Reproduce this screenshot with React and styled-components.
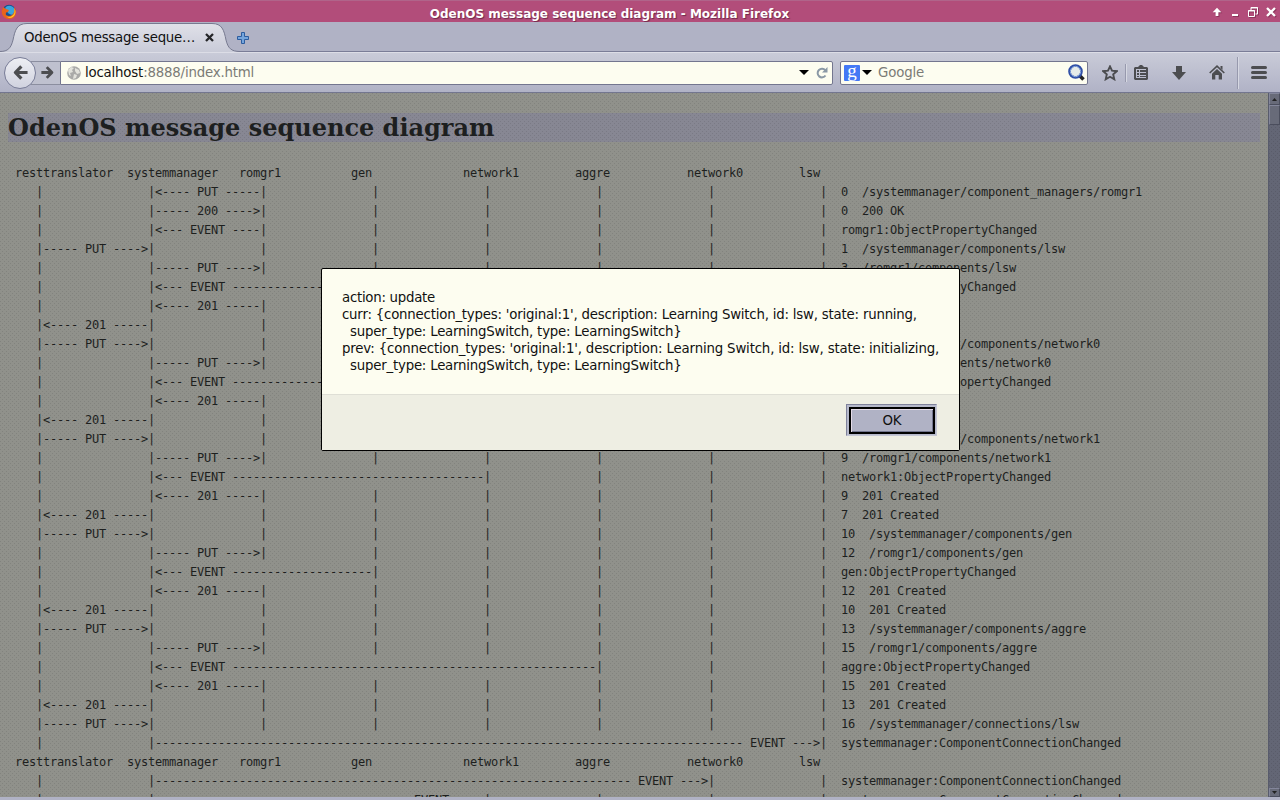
import React from 'react';
import styled, { createGlobalStyle } from 'styled-components';

const Global = createGlobalStyle`
  * { box-sizing: border-box; }
  html, body { margin: 0; padding: 0; overflow: hidden; }
`;

const ui = '"DejaVu Sans", sans-serif';

const dither = `
  background-image:
    radial-gradient(circle at 0.5px 0.5px, #00000018 0.7px, transparent 0.7px),
    radial-gradient(circle at 2.5px 2.5px, #00000018 0.7px, transparent 0.7px);
  background-size: 4px 4px;
`;

const Window = styled.div`
  position: relative;
  display: flex;
  flex-direction: column;
  width: 1280px;
  height: 800px;
  overflow: hidden;
  background: #b0b2c5;
  font-family: ${ui};
`;

const TitleBar = styled.header`
  display: flex;
  align-items: center;
  height: 22px;
  padding: 1px 3px 0 1px;
  border-top: 1px solid #b0648a;
  background: #b24d7a;
  color: #fff;
`;

const Title = styled.div`
  flex: 1;
  padding: 3px 9px 0 0;
  text-align: center;
  font: bold 12px/16px ${ui};
  text-shadow: 1px 1px 1px #6d2a4a;
`;

const WindowButtons = styled.div`
  display: flex;
  align-items: center;
  gap: 6px;
  svg { display: block; filter: drop-shadow(1px 1px 0 #8b355b); }
`;

const TabStrip = styled.div`
  display: flex;
  align-items: flex-end;
  height: 30px;
  background: #b0b2c5;
  box-shadow: inset 0 -1px #7a7d97;
`;

const Tab = styled.div`
  position: relative;
  display: flex;
  align-items: center;
  width: 236px;
  height: 30px;
  padding: 1px 0 0 24px;
  font: 13.33px/20px ${ui};
  color: #111;
`;

const TabShape = styled.svg`
  position: absolute;
  left: 0;
  top: 0;
`;

const TabLabel = styled.span`
  position: relative;
  width: 172px;
  white-space: nowrap;
  letter-spacing: -0.26px;
`;

const TabClose = styled.svg`
  position: relative;
  margin-left: 9px;
`;

const NewTab = styled.svg`
  margin: 0 0 8px 1px;
`;

const Toolbar = styled.nav`
  display: flex;
  align-items: center;
  height: 41px;
  padding: 0 12px 0 4px;
  background: linear-gradient(#c9cbd8, #b0b2c6);
  border-top: 1px solid #dcdde6;
  border-bottom: 1px solid #73768f;
`;

const BackButton = styled.div`
  position: relative;
  z-index: 1;
  display: grid;
  place-items: center;
  width: 32px;
  height: 32px;
  border: 1px solid #787c97;
  border-radius: 50%;
  background: linear-gradient(#edeef3, #d0d2df);
`;

const ForwardButton = styled.div`
  display: grid;
  place-items: center;
  width: 29px;
  height: 24px;
  margin-left: -5px;
  padding-left: 4px;
  border: solid #8b8e9f;
  border-width: 1px 0;
  background: #bfc1cf;
`;

const Field = styled.div`
  display: flex;
  align-items: center;
  width: ${p => p.$width}px;
  height: 24px;
  margin-left: ${p => p.$gap || 0}px;
  padding: 0 ${p => p.$right}px 0 ${p => p.$left}px;
  border: 1px solid #73768f;
  border-radius: ${p => p.$radius};
  background: #fdfdf0;
`;

const FieldText = styled.span`
  flex: 1;
  padding-left: ${p => p.$pad}px;
  font: 13.33px/20px ${ui};
  letter-spacing: ${p => p.$tracking || 0}px;
  color: #7b7b76;
  b { font-weight: normal; color: #111; }
`;

const Caret = styled.i`
  border: 5px solid transparent;
  border-top-color: #000;
  border-bottom: 0;
  margin: 0 ${p => p.$after}px 0 ${p => p.$before || 0}px;
`;

const EngineBadge = styled.span`
  display: grid;
  place-items: center;
  width: 16px;
  height: 16px;
  border-radius: 1px;
  background: #4479f5;
  color: #fff;
  font: 19px/12px "Liberation Serif", serif;
  padding-bottom: 5px;
`;

const Actions = styled.div`
  flex: 1;
  display: flex;
  align-items: center;
  padding-left: 14px;
  svg { display: block; flex: none; }
`;

const Icon = styled.svg`
  margin-left: ${p => p.$before || 0}px;
`;

const Rule = styled.i`
  width: 1px;
  height: ${p => p.$h}px;
  margin: 0 ${p => p.$after}px 0 ${p => p.$before}px;
  background: #9799ad;
  box-shadow: 1px 0 #d6d8e2;
`;

const Content = styled.div`
  display: flex;
  height: 704px;
`;

const Page = styled.main`
  flex: 1;
  height: 704px;
  overflow: hidden;
  padding: 20px 8px 0;
  background-color: #90918b;
  ${dither}
`;

const Heading = styled.h1`
  height: 29px;
  margin: 0 0 22px;
  font: bold 24px/29px "DejaVu Serif", serif;
  color: #1d1f20;
  background-color: #878793;
  ${dither}
`;

const Diagram = styled.pre`
  margin: 0;
  font: 12px/19px "DejaVu Sans Mono", monospace;
  letter-spacing: -0.224px;
  color: #1d1f1e;
`;

const ScrollBar = styled.aside`
  display: flex;
  flex-direction: column;
  width: 12px;
  background-color: #636675;
  ${dither}
  border-left: 1px solid #585b6c;
`;

const ScrollPart = styled.div`
  display: grid;
  place-items: center;
  height: ${p => p.$h}px;
  margin-top: ${p => (p.$push ? 'auto' : 0)};
  border: 1px solid #4b4e5d;
  border-top-color: #83869a;
  border-left-color: #83869a;
  background: #686b79;
`;

const Dialog = styled.section`
  position: absolute;
  left: 321px;
  top: 268px;
  display: flex;
  flex-direction: column;
  width: 639px;
  height: 183px;
  border: 1px solid #000;
  border-radius: 2px;
  background: #fdfdf0;
`;

const Message = styled.div`
  height: 125px;
  padding: 20px 0 0 20px;
  white-space: pre;
  font: 13.33px/17px ${ui};
  color: #111;
`;

const MessageLine = styled.div`
  letter-spacing: ${p => p.$tracking}px;
`;

const DialogFooter = styled.footer`
  flex: 1;
  display: flex;
  justify-content: flex-end;
  padding: 9px 22px 0 0;
  border-top: 1px solid #dfdfd6;
  background: #eeeee3;
`;

const OkFrame = styled.div`
  width: 91px;
  height: 32px;
  padding: 2px;
  border: 1px solid;
  border-color: #7f829b #c4c6d4 #c4c6d4 #7f829b;
  background: #b6b9cb;
`;

const OkButton = styled.button`
  display: block;
  width: 86px;
  height: 27px;
  padding: 0;
  border: 2px solid #000;
  background: #b0b2c5;
  box-shadow: inset 1px 1px #e4dbe8, inset -1px -1px #73768f;
  font: 13.33px/22px ${ui};
  color: #111;
`;

const LANES = ['resttranslator', 'systemmanager', 'romgr1', 'gen', 'network1', 'aggre', 'network0', 'lsw'];
const HEADER = LANES.map(n => ' ' + n.padEnd(15)).join('').trimEnd();

const ROWS = [
  null,
  ['PUT', 2, 1, '0  /systemmanager/component_managers/romgr1'],
  ['200', 1, 2, '0  200 OK'],
  ['EVENT', 2, 1, 'romgr1:ObjectPropertyChanged'],
  ['PUT', 0, 1, '1  /systemmanager/components/lsw'],
  ['PUT', 1, 2, '3  /romgr1/components/lsw'],
  ['EVENT', 7, 1, 'lsw:ObjectPropertyChanged'],
  ['201', 2, 1, '3  201 Created'],
  ['201', 1, 0, '1  201 Created'],
  ['PUT', 0, 1, '4  /systemmanager/components/network0'],
  ['PUT', 1, 2, '6  /romgr1/components/network0'],
  ['EVENT', 6, 1, 'network0:ObjectPropertyChanged'],
  ['201', 2, 1, '6  201 Created'],
  ['201', 1, 0, '4  201 Created'],
  ['PUT', 0, 1, '7  /systemmanager/components/network1'],
  ['PUT', 1, 2, '9  /romgr1/components/network1'],
  ['EVENT', 4, 1, 'network1:ObjectPropertyChanged'],
  ['201', 2, 1, '9  201 Created'],
  ['201', 1, 0, '7  201 Created'],
  ['PUT', 0, 1, '10  /systemmanager/components/gen'],
  ['PUT', 1, 2, '12  /romgr1/components/gen'],
  ['EVENT', 3, 1, 'gen:ObjectPropertyChanged'],
  ['201', 2, 1, '12  201 Created'],
  ['201', 1, 0, '10  201 Created'],
  ['PUT', 0, 1, '13  /systemmanager/components/aggre'],
  ['PUT', 1, 2, '15  /romgr1/components/aggre'],
  ['EVENT', 5, 1, 'aggre:ObjectPropertyChanged'],
  ['201', 2, 1, '15  201 Created'],
  ['201', 1, 0, '13  201 Created'],
  ['PUT', 0, 1, '16  /systemmanager/connections/lsw'],
  ['EVENT', 1, 7, 'systemmanager:ComponentConnectionChanged'],
  null,
  ['EVENT', 1, 6, 'systemmanager:ComponentConnectionChanged'],
  ['EVENT', 1, 4, 'systemmanager:ComponentConnectionChanged'],
];

// Lifelines sit 16 characters apart, starting at column 4.
function renderRow(row) {
  if (!row) return HEADER;
  const [label, from, to, note] = row;
  const lo = Math.min(from, to);
  const hi = Math.max(from, to);
  const width = (hi - lo) * 16 - 1;
  const stub = label === 'EVENT' ? '---' : '----';
  const arrow = from > to
    ? `<${stub} ${label} `.padEnd(width, '-')
    : ` ${label} ${stub}>`.padStart(width, '-');
  let line = '    ';
  for (let i = 0; i < LANES.length; i++) {
    line += '|';
    if (i === lo) { line += arrow; i = hi - 1; }
    else if (i < LANES.length - 1) line += ' '.repeat(15);
  }
  return line + '  ' + note;
}

const MESSAGE = [
  ['action: update', -0.27],
  ["curr: {connection_types: 'original:1', description: Learning Switch, id: lsw, state: running,", -0.207],
  ['  super_type: LearningSwitch, type: LearningSwitch}', -0.215],
  ["prev: {connection_types: 'original:1', description: Learning Switch, id: lsw, state: initializing,", -0.167],
  ['  super_type: LearningSwitch, type: LearningSwitch}', -0.215],
];

const FirefoxLogo = () => (
  <svg width="16" height="16" viewBox="0 0 16 16">
    <circle cx="8" cy="7.5" r="6.8" fill="#16508f" />
    <path d="M4 4Q7 0 12 3Q15 6 13 10Q10 12 7 9Z" fill="#3ba4dc" />
    <path d="M2 3Q0 7 1 10Q3 15 8 15Q14 15 15 9Q15 5 13 3Q14 8 11 11Q8 13 5 11Q4 8 7 8L8 6L5 5Z" fill="#e8641b" />
    <path d="M13 4Q15 9 11 12Q8 14 5 12Q9 16 13 12Q16 8 13 4Z" fill="#ffc928" />
  </svg>
);

const Arrow = ({ size = 14, flip }) => (
  <svg width={size} height={size} viewBox="0 0 14 14" fill="none" stroke="#4c4d50" strokeWidth="3" strokeLinejoin="round">
    <g transform={flip ? 'matrix(-1 0 0 1 14 0)' : undefined}>
      <path d="M7.8 1.2L2.2 7L7.8 12.8M3 7H13.6" />
    </g>
  </svg>
);

const Globe = () => (
  <svg width="14" height="14" viewBox="0 0 14 14">
    <circle cx="7" cy="7" r="6.8" fill="#aaaaa8" />
    <path d="M1 4L4 1L7 2L5 4L6 6L3 7L4 10L2 9ZM8 2L12 4L13 7L10 8L8 5ZM7 8L10 9L9 12L6 13Z" fill="#e3e3dc" />
  </svg>
);

export default function App() {
  return (
    <Window>
      <Global />
      <TitleBar>
        <FirefoxLogo />
        <Title>OdenOS message sequence diagram - Mozilla Firefox</Title>
        <WindowButtons>
          <svg width="12" height="10" viewBox="0 0 12 10"><path d="M6 .8L10.3 5.3H7.4V9H4.6V5.3H1.7Z" fill="#fff" /></svg>
          <svg width="12" height="10" viewBox="0 0 12 10"><path d="M3 7H9V9H3Z" fill="#fff" /></svg>
          <svg width="12" height="12" viewBox="0 0 12 12" fill="none" stroke="#fff"><path d="M4 4V1.5H10.5V8H8.5M4 2H11M1.5 4.5H7.5V10.5H1.5ZM1 5H8" /></svg>
          <svg width="12" height="12" viewBox="0 0 12 12"><path d="M2 2L10 10M10 2L2 10" stroke="#fff" strokeWidth="2.3" /></svg>
        </WindowButtons>
      </TitleBar>
      <TabStrip>
        <Tab>
          <TabShape width="240" height="30" viewBox="0 0 240 30">
            <defs><linearGradient id="tab" x2="0" y2="1"><stop stopColor="#e0e1e9" /><stop offset="1" stopColor="#c9cbd8" /></linearGradient></defs>
            <path d="M0 29.5C8 29.5 11 26 13 18C15 8 17 1.5 27 1.5H212C222 1.5 224 8 226 18C228 26 231 29.5 240 29.5V30H0Z" fill="url(#tab)" />
            <path d="M0 29.5C8 29.5 11 26 13 18C15 8 17 1.5 27 1.5H212C222 1.5 224 8 226 18C228 26 231 29.5 240 29.5" fill="none" stroke="#777a90" />
          </TabShape>
          <TabLabel>OdenOS message seque…</TabLabel>
          <TabClose width="9" height="9" viewBox="0 0 9 9"><path d="M1 1L8 8M8 1L1 8" stroke="#252629" strokeWidth="2.3" /></TabClose>
        </Tab>
        <NewTab width="12" height="12" viewBox="0 0 12 12"><path d="M4.5 .5H7.5V4.5H11.5V7.5H7.5V11.5H4.5V7.5H.5V4.5H4.5Z" fill="#75a5dc" stroke="#2d5d9f" /></NewTab>
      </TabStrip>
      <Toolbar>
        <BackButton><Arrow size={15} /></BackButton>
        <ForwardButton><Arrow size={13} flip /></ForwardButton>
        <Field $width={773} $left={6} $right={4} $radius="0 2px 2px 0">
          <Globe />
          <FieldText $pad={4} $tracking={-0.19}><b>localhost</b>:8888/index.html</FieldText>
          <Caret $after={7} />
          <svg width="12" height="12" viewBox="0 0 12 12"><path d="M9.5 8.5A4.3 4.3 0 1 1 9.3 3.4" fill="none" stroke="#8a98a5" strokeWidth="2" /><path d="M11.5 0V5.5H6Z" fill="#8a98a5" /></svg>
        </Field>
        <Field $width={248} $gap={7} $left={3} $right={2} $radius="2px">
          <EngineBadge>g</EngineBadge>
          <Caret $before={2} $after={0} />
          <FieldText $pad={6} $tracking={-0.15}>Google</FieldText>
          <svg width="17" height="17" viewBox="0 0 17 17">
            <path d="M11.5 11.5L15.5 15.5" stroke="#252525" strokeWidth="3.5" />
            <circle cx="7.5" cy="7.5" r="6" fill="#e6ebe9" stroke="#2e4da5" strokeWidth="2.6" />
            <circle cx="7.5" cy="7.5" r="5.2" fill="none" stroke="#86a5dc" />
          </svg>
        </Field>
        <Actions>
          <Icon width="16" height="16" viewBox="0 0 16 16"><path d="M8 1.4L10 5.7L14.8 6.2L11.2 9.4L12.3 14.3L8 11.8L3.7 14.3L4.8 9.4L1.2 6.2L6 5.7Z" fill="none" stroke="#4c4d50" strokeWidth="1.9" /></Icon>
          <Rule $h={18} $before={7} $after={8} />
          <Icon width="14" height="15" viewBox="0 0 14 15" fill="#4c4d50">
            <path fillRule="evenodd" d="M1 2H4L6 0H8L10 2H13L14 3V14L13 15H1L0 14V3ZM2 4V13H12V4Z" />
            <path d="M3 5H5V7H3ZM6 5H12V7H6ZM3 8H5V10H3ZM6 8H12V10H6ZM3 11H5V12H3ZM6 11H12V12H6Z" />
          </Icon>
          <Icon $before={24} width="14" height="14" viewBox="0 0 14 14"><path d="M4 0H10V6H14L7 14L0 6H4Z" fill="#4c4d50" /></Icon>
          <Icon $before={23} width="16" height="15" viewBox="0 0 16 15"><path d="M.7 8L8 1.2L15.3 8" fill="none" stroke="#4c4d50" strokeWidth="1.6" /><path d="M11.5 1H13.5V5L11.5 3ZM8 4L13 8.7V14.5H9.7V10H6.3V14.5H3V8.7Z" fill="#4c4d50" /></Icon>
          <Rule $h={32} $before={12} $after={13} />
          <Icon width="16" height="14" viewBox="0 0 16 14"><path d="M1.5 1.5H14.5M1.5 6.5H14.5M1.5 11.5H14.5" stroke="#4c4d50" strokeWidth="3" strokeLinecap="round" /></Icon>
        </Actions>
      </Toolbar>
      <Content>
        <Page>
          <Heading>OdenOS message sequence diagram</Heading>
          <Diagram>{ROWS.map(renderRow).join('\n')}</Diagram>
        </Page>
        <ScrollBar>
          <ScrollPart $h={12}><svg width="5" height="3"><path d="M0 3L2.5 0L5 3Z" fill="#222" /></svg></ScrollPart>
          <ScrollPart $h={20} />
          <ScrollPart $h={9} $push><svg width="5" height="3"><path d="M0 0H5L2.5 3Z" fill="#222" /></svg></ScrollPart>
        </ScrollBar>
      </Content>
      <Dialog>
        <Message>
          {MESSAGE.map(([text, tracking], i) => (
            <MessageLine key={i} $tracking={tracking}>{text}</MessageLine>
          ))}
        </Message>
        <DialogFooter>
          <OkFrame><OkButton>OK</OkButton></OkFrame>
        </DialogFooter>
      </Dialog>
    </Window>
  );
}
